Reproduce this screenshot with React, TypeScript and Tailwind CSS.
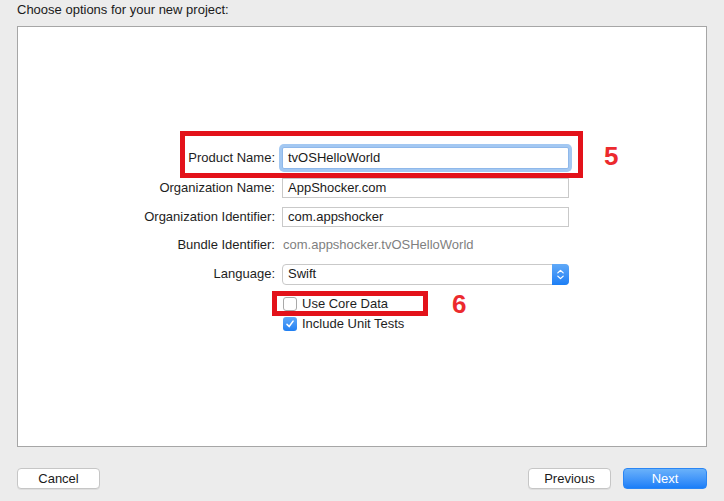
import * as React from "react";

const FONT = { fontFamily: '"Liberation Sans", Arial, sans-serif' };

function Label({ children }: { children: React.ReactNode }) {
  return (
    <span className="justify-self-end text-[13px] leading-[16px] text-[#1e1e1e]">
      {children}
    </span>
  );
}

function TextField({ value }: { value: string }) {
  return (
    <div className="flex h-[20px] w-[287px] items-center border border-[#c9c9c9] bg-white pl-[5px] text-[13px] text-[#1a1a1a]">
      {value}
    </div>
  );
}

function Checkbox({ checked, label }: { checked?: boolean; label: string }) {
  return (
    <div className="col-start-2 flex items-center gap-[5px] pl-[1px]">
      {checked ? (
        <span className="flex h-[14px] w-[14px] items-center justify-center rounded-[3px] bg-gradient-to-b from-[#5fa9f8] to-[#1f7ff2]">
          <svg viewBox="0 0 14 14" className="h-[12px] w-[12px]" fill="none">
            <path
              d="M3.5 7.4 L6 10 L10.6 3.6"
              stroke="white"
              strokeWidth="1.8"
              strokeLinecap="round"
              strokeLinejoin="round"
            />
          </svg>
        </span>
      ) : (
        <span className="h-[14px] w-[14px] rounded-[3px] border border-[#a9a9a9] bg-white" />
      )}
      <span className="text-[13px] leading-[16px] text-[#1e1e1e]">{label}</span>
    </div>
  );
}

function Button({
  children,
  primary,
}: {
  children: React.ReactNode;
  primary?: boolean;
}) {
  return (
    <button
      className={
        primary
          ? "flex h-[21px] w-[84px] items-center justify-center rounded-[4px] border border-[#2b86f4] bg-gradient-to-b from-[#69b1fa] to-[#1a7ef8] text-[13px] text-white"
          : "flex h-[21px] w-[83px] items-center justify-center rounded-[4px] border border-[#c6c6c6] bg-white text-[13px] text-[#1a1a1a] shadow-[0_1px_0_rgba(0,0,0,0.06)]"
      }
    >
      {children}
    </button>
  );
}

export default function App() {
  return (
    <div
      className="flex h-[501px] w-[724px] flex-col bg-[#ececec] px-[17px]"
      style={FONT}
    >
      {/* ── Title ── */}
      <p className="mt-[2px] mb-[8px] text-[13px] leading-[16px] text-[#1a1a1a]">
        Choose options for your new project:
      </p>

      {/* ── Options panel ── */}
      <div className="relative h-[421px] w-[690px] border border-[#a6a6a6] bg-white">
        <div className="mt-[116px] grid grid-cols-[257px_287px] items-center gap-x-[7px]">
          <div className="col-span-2 grid h-[30px] grid-cols-subgrid items-center">
            <Label>Product Name:</Label>
            <div className="flex h-[22px] w-[287px] items-center rounded-[2px] border border-[#8fb8ea] bg-white pl-[5px] text-[13px] text-[#1a1a1a] shadow-[0_0_0_3px_#a3c8f2]">
              tvOSHelloWorld
            </div>
          </div>
          <div className="col-span-2 grid h-[30px] grid-cols-subgrid items-center">
            <Label>Organization Name:</Label>
            <TextField value="AppShocker.com" />
          </div>
          <div className="col-span-2 grid h-[28px] grid-cols-subgrid items-center">
            <Label>Organization Identifier:</Label>
            <TextField value="com.appshocker" />
          </div>
          <div className="col-span-2 grid h-[28px] grid-cols-subgrid items-center">
            <Label>Bundle Identifier:</Label>
            <span className="pl-[1px] text-[13px] leading-[16px] text-[#7f7f7f]">
              com.appshocker.tvOSHelloWorld
            </span>
          </div>
          <div className="col-span-2 grid h-[30px] grid-cols-subgrid items-center">
            <Label>Language:</Label>
            <div className="flex h-[21px] w-[287px] items-stretch rounded-[4px] border border-[#c9c9c9] bg-white text-[13px] text-[#1a1a1a]">
              <span className="flex flex-1 items-center pl-[5px]">Swift</span>
              <span className="-my-px -mr-px flex w-[17px] items-center justify-center rounded-r-[4px] bg-gradient-to-b from-[#5fa9f8] to-[#1a7ef5]">
                <svg viewBox="0 0 10 14" className="h-[13px] w-[9px]" fill="none">
                  <path
                    d="M2 5.2 L5 2.4 L8 5.2 M2 8.8 L5 11.6 L8 8.8"
                    stroke="white"
                    strokeWidth="1.4"
                    strokeLinecap="round"
                    strokeLinejoin="round"
                  />
                </svg>
              </span>
            </div>
          </div>
          <div className="col-span-2 mt-[5px] grid h-[20px] grid-cols-subgrid items-center">
            <Checkbox label="Use Core Data" />
          </div>
          <div className="col-span-2 grid h-[20px] grid-cols-subgrid items-center">
            <Checkbox checked label="Include Unit Tests" />
          </div>
        </div>

        {/* ── Annotations ── */}
        <div className="pointer-events-none absolute left-[162px] top-[104px] h-[47px] w-[403px] border-[5px] border-[#e3121a]" />
        <span className="absolute left-[586px] top-[116px] text-[26px] font-bold leading-none text-[#ec2a2e]">
          5
        </span>
        <div className="pointer-events-none absolute left-[254px] top-[264px] h-[25px] w-[156px] border-[5px] border-[#e3121a]" />
        <span className="absolute left-[434px] top-[264px] text-[26px] font-bold leading-none text-[#ec2a2e]">
          6
        </span>
      </div>

      {/* ── Footer buttons ── */}
      <div className="mt-[21px] flex items-center">
        <Button>Cancel</Button>
        <div className="flex-1" />
        <Button>Previous</Button>
        <div className="w-[12px]" />
        <Button primary>Next</Button>
      </div>
    </div>
  );
}
